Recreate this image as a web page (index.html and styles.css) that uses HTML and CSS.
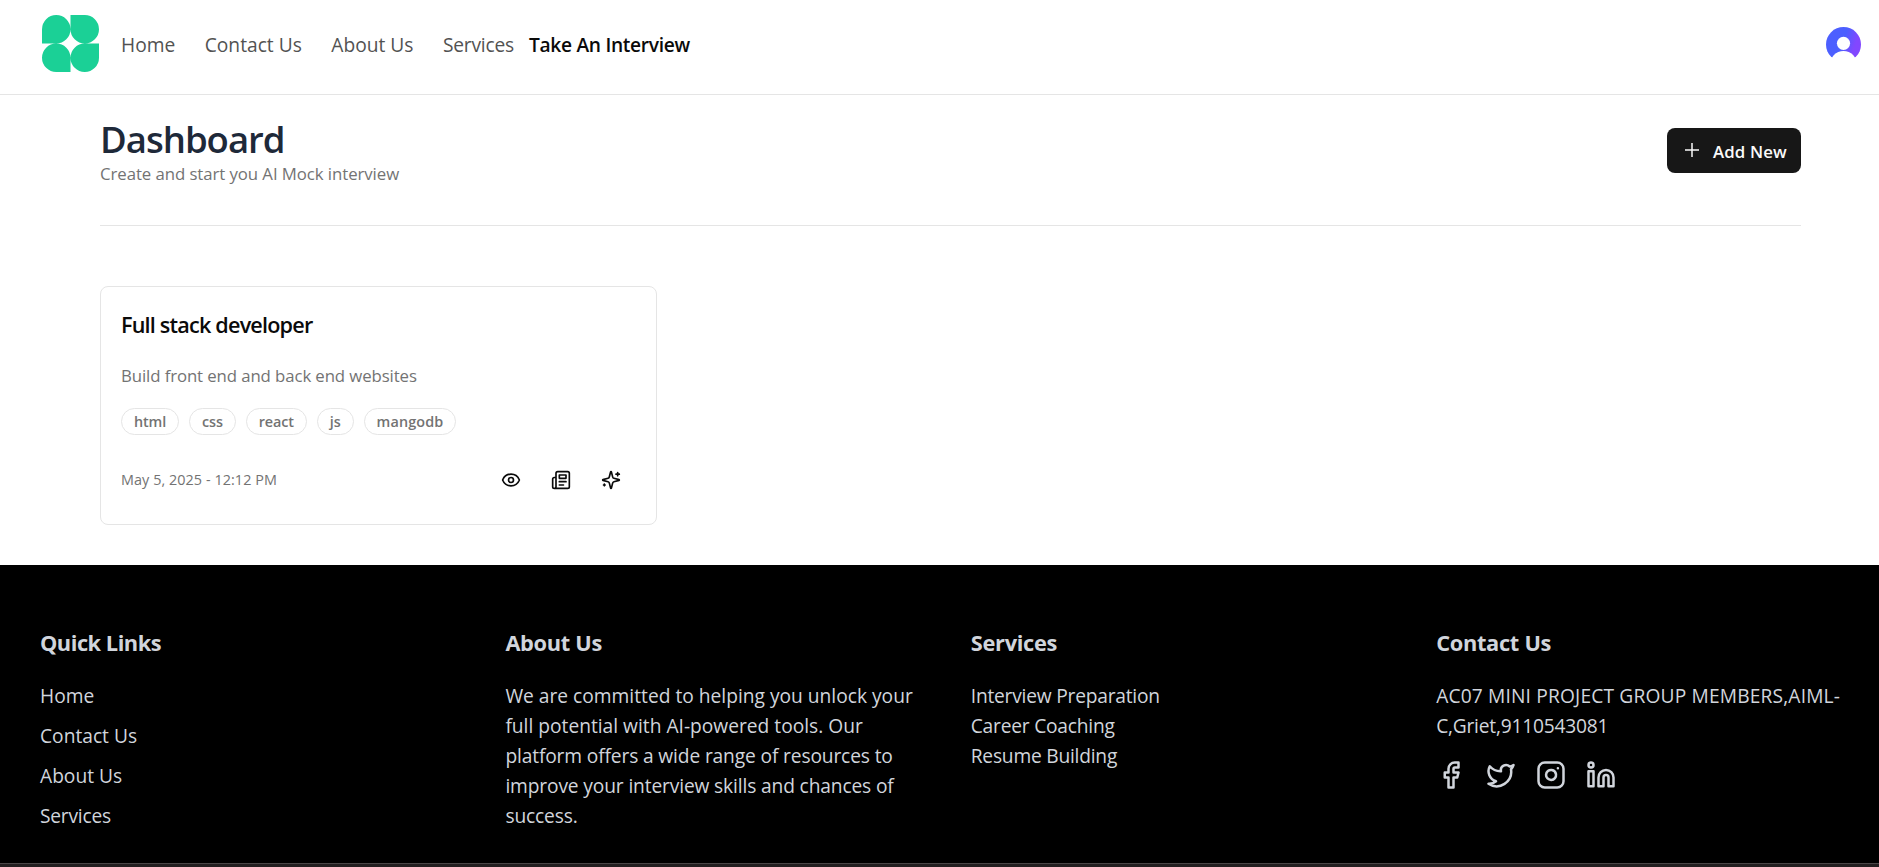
FILE: index.html
```html
<!DOCTYPE html>
<html lang="en">
<head>
<meta charset="utf-8">
<title>Dashboard</title>
<link rel="stylesheet" href="styles.css">
</head>
<body>
<header class="header">
  <svg class="logo" viewBox="0 0 56 56" aria-hidden="true"><path d="M0 28V14a14 14 0 1 1 14 14zM28 0h14a14 14 0 1 1-14 14zM28 56H14a14 14 0 1 1 14-14zM56 28v14a14 14 0 1 1-14-14z"/></svg>
  <nav class="nav">
    <a class="nav-link">Home</a>
    <a class="nav-link">Contact Us</a>
    <a class="nav-link">About Us</a>
    <a class="nav-link nav-link-tight">Services</a>
    <a class="nav-link nav-link-active">Take An Interview</a>
  </nav>
  <svg class="avatar" viewBox="0 0 35 35" aria-hidden="true">
    <defs>
      <linearGradient id="av" x1="0" y1="0.3" x2="1" y2="0.6"><stop offset="0.5" stop-color="#4c5fff"/><stop offset="0.85" stop-color="#8247ff"/></linearGradient>
      <clipPath id="avc"><circle cx="17.5" cy="17.5" r="17.5"/></clipPath>
    </defs>
    <g clip-path="url(#avc)"><rect width="35" height="30.5" fill="url(#av)"/><circle cx="17.5" cy="16.3" r="6.6" fill="#fff"/><circle cx="17.5" cy="37.6" r="13.6" fill="#fff"/></g>
  </svg>
</header>
<main class="main">
  <section class="heading">
    <div>
      <h1 class="title">Dashboard</h1>
      <p class="subtitle">Create and start you AI Mock interview</p>
    </div>
    <button class="add-btn">
      <svg class="icon-add" viewBox="0 0 24 24"><path d="M5 12h14M12 5v14"/></svg>
      <span>Add New</span>
    </button>
  </section>
  <article class="card">
    <h2 class="card-title">Full stack developer</h2>
    <p class="card-desc">Build front end and back end websites</p>
    <div class="tags">
      <span class="tag">html</span><span class="tag">css</span><span class="tag">react</span><span class="tag">js</span><span class="tag tag-wide">mangodb</span>
    </div>
    <div class="card-foot">
      <span class="date">May 5, 2025 - 12:12 PM</span>
      <div class="actions">
        <svg class="icon" viewBox="0 0 24 24"><path d="M2.062 12.348a1 1 0 0 1 0-.696 10.75 10.75 0 0 1 19.876 0 1 1 0 0 1 0 .696 10.75 10.75 0 0 1-19.876 0"/><circle cx="12" cy="12" r="3"/></svg>
        <svg class="icon" viewBox="0 0 24 24"><path d="M4 22h16a2 2 0 0 0 2-2V4a2 2 0 0 0-2-2H8a2 2 0 0 0-2 2v16a2 2 0 0 1-2 2Zm0 0a2 2 0 0 1-2-2v-9c0-1.1.9-2 2-2h2M18 14h-8M15 18h-5M10 6h8v4h-8V6Z"/></svg>
        <svg class="icon" viewBox="0 0 24 24"><path d="M9.937 15.5A2 2 0 0 0 8.5 14.063l-6.135-1.582a.5.5 0 0 1 0-.962L8.5 9.936A2 2 0 0 0 9.937 8.5l1.582-6.135a.5.5 0 0 1 .963 0L14.063 8.5A2 2 0 0 0 15.5 9.937l6.135 1.581a.5.5 0 0 1 0 .964L15.5 14.063a2 2 0 0 0-1.437 1.437l-1.582 6.135a.5.5 0 0 1-.963 0zM20 3v4M22 5h-4M4 17v2M5 18H3"/></svg>
      </div>
    </div>
  </article>
</main>
<footer class="footer">
  <section>
    <h3 class="foot-title foot-title-tight">Quick Links</h3>
    <ul class="foot-links"><li>Home</li><li>Contact Us</li><li>About Us</li><li class="tight">Services</li></ul>
  </section>
  <section>
    <h3 class="foot-title">About Us</h3>
    <p class="foot-text">We are committed to helping you unlock your<br>full potential with AI-powered tools. Our<br><span class="snug">platform offers a wide range of resources to<br>improve your interview skills and chances of<br>success.</span></p>
  </section>
  <section>
    <h3 class="foot-title">Services</h3>
    <p class="foot-text tight">Interview Preparation<br>Career Coaching<br>Resume Building</p>
  </section>
  <section>
    <h3 class="foot-title">Contact Us</h3>
    <p class="foot-text"><span class="loose">AC07 MINI PROJECT GROUP MEMBERS,AIML-</span><br><span class="tight">C,Griet,9110543081</span></p>
    <div class="social">
      <svg class="icon" viewBox="0 0 24 24"><path d="M18 2h-3a5 5 0 0 0-5 5v3H7v4h3v8h4v-8h3l1-4h-4V7a1 1 0 0 1 1-1h3z"/></svg>
      <svg class="icon" viewBox="0 0 24 24"><path d="M22 4s-.7 2.1-2 3.4c1.6 10-9.4 17.3-18 11.6 2.2.1 4.4-.6 6-2C3 15.5.5 9.6 3 5c2.2 2.6 5.6 4.1 9 4-.9-4.2 4-6.6 7-3.8 1.1 0 3-1.2 3-1.2z"/></svg>
      <svg class="icon" viewBox="0 0 24 24"><rect x="2" y="2" width="20" height="20" rx="5"/><path d="M16 11.37A4 4 0 1 1 12.63 8 4 4 0 0 1 16 11.37zM17.5 6.5h.01"/></svg>
      <svg class="icon" viewBox="0 0 24 24"><path d="M16 8a6 6 0 0 1 6 6v7h-4v-7a2 2 0 0 0-4 0v7h-4v-7a6 6 0 0 1 6-6z"/><rect x="2" y="9" width="4" height="12"/><circle cx="4" cy="4" r="2"/></svg>
    </div>
  </section>
</footer>
<div class="bottom-strip"></div>
</body>
</html>
```
FILE: styles.css
```css
* { box-sizing: border-box; margin: 0; padding: 0; }
body { font-family: "Open Sans", "Noto Sans", sans-serif; font-size: 19.2px; line-height: 30px; color: #0a0a0a; background: #fff; height: 867px; overflow: hidden; }
.tight { letter-spacing: -0.22px; }
.snug { letter-spacing: -0.14px; }
.loose { letter-spacing: 0.16px; }
.header { display: flex; align-items: center; height: 95px; padding: 0 18px 5px 42px; border-bottom: 1px solid #e5e5e5; }
.logo { width: 57px; height: 57px; margin-top: -2px; fill: #1bd096; }
.nav { display: flex; gap: 29.5px; margin-left: 22px; padding-top: 1px; }
.nav-link { color: #525252; white-space: nowrap; }
.nav-link-tight { letter-spacing: -0.21px; }
.nav-link-active { color: #0a0a0a; font-weight: 600; letter-spacing: -0.3px; margin-left: -14.5px; }
.avatar { width: 35px; height: 35px; margin-left: auto; }
.main { height: 470px; padding: 0 78px 0 100px; }
.heading { display: flex; justify-content: space-between; align-items: flex-start; height: 131px; border-bottom: 1px solid #e5e5e5; padding-top: 22px; }
.title { font-size: 36.5px; line-height: 45px; font-weight: 600; letter-spacing: -1px; color: #1e2939; }
.subtitle { font-size: 16.8px; line-height: 25px; letter-spacing: -0.07px; margin-top: -1px; color: #737373; }
.add-btn { display: flex; align-items: center; gap: 9px; width: 134px; height: 45px; margin-top: 11px; padding-left: 13px; border: 0; border-radius: 8px; background: #171717; color: #fafafa; font: 600 16.8px/25px "Open Sans", sans-serif; letter-spacing: 0.16px; white-space: nowrap; }
.add-btn span { padding-top: 1px; }
.icon-add { width: 24px; height: 24px; margin-top: -2px; fill: none; stroke: currentColor; stroke-width: 1.5; }
.card { width: 557px; height: 239px; margin-top: 60px; padding: 18px 20px 20px; border: 1px solid #e5e5e5; border-radius: 8px; }
.card-title { font-size: 21.6px; line-height: 40px; font-weight: 600; letter-spacing: -0.8px; }
.card-desc { font-size: 16.8px; line-height: 25px; letter-spacing: -0.1px; color: #737373; margin-top: 18px; }
.tags { display: flex; gap: 10px; margin-top: 20px; }
.tag { height: 27px; padding: 0 12px; border: 1px solid #e5e5e5; border-radius: 14px; font-size: 14.4px; line-height: 26px; font-weight: 600; letter-spacing: -0.14px; color: #737373; }
.tag-wide { letter-spacing: 0.15px; }
.card-foot { display: flex; justify-content: space-between; align-items: center; margin-top: 25px; height: 40px; padding-right: 15px; }
.date { font-size: 14.4px; line-height: 20px; letter-spacing: 0.06px; color: #737373; }
.actions { display: flex; gap: 30px; }
.icon { width: 20px; height: 20px; fill: none; stroke: currentColor; stroke-width: 2; stroke-linecap: round; stroke-linejoin: round; }
.footer { display: grid; grid-template-columns: repeat(4, minmax(0, 1fr)); column-gap: 62.5px; height: 298px; padding: 60px 40px 0; background: #000; color: #d1d5dc; }
.foot-title { font-size: 21.8px; line-height: 35px; font-weight: 700; letter-spacing: -0.3px; margin-bottom: 21px; }
.foot-title-tight { letter-spacing: -0.48px; }
.foot-links { list-style: none; display: grid; gap: 10px; }
.foot-text { white-space: nowrap; }
.social { display: flex; gap: 20px; margin-top: 19px; }
.social .icon { width: 30px; height: 30px; }
.bottom-strip { height: 4px; background: #231f20; border-top: 1px solid #4a4647; }
```
